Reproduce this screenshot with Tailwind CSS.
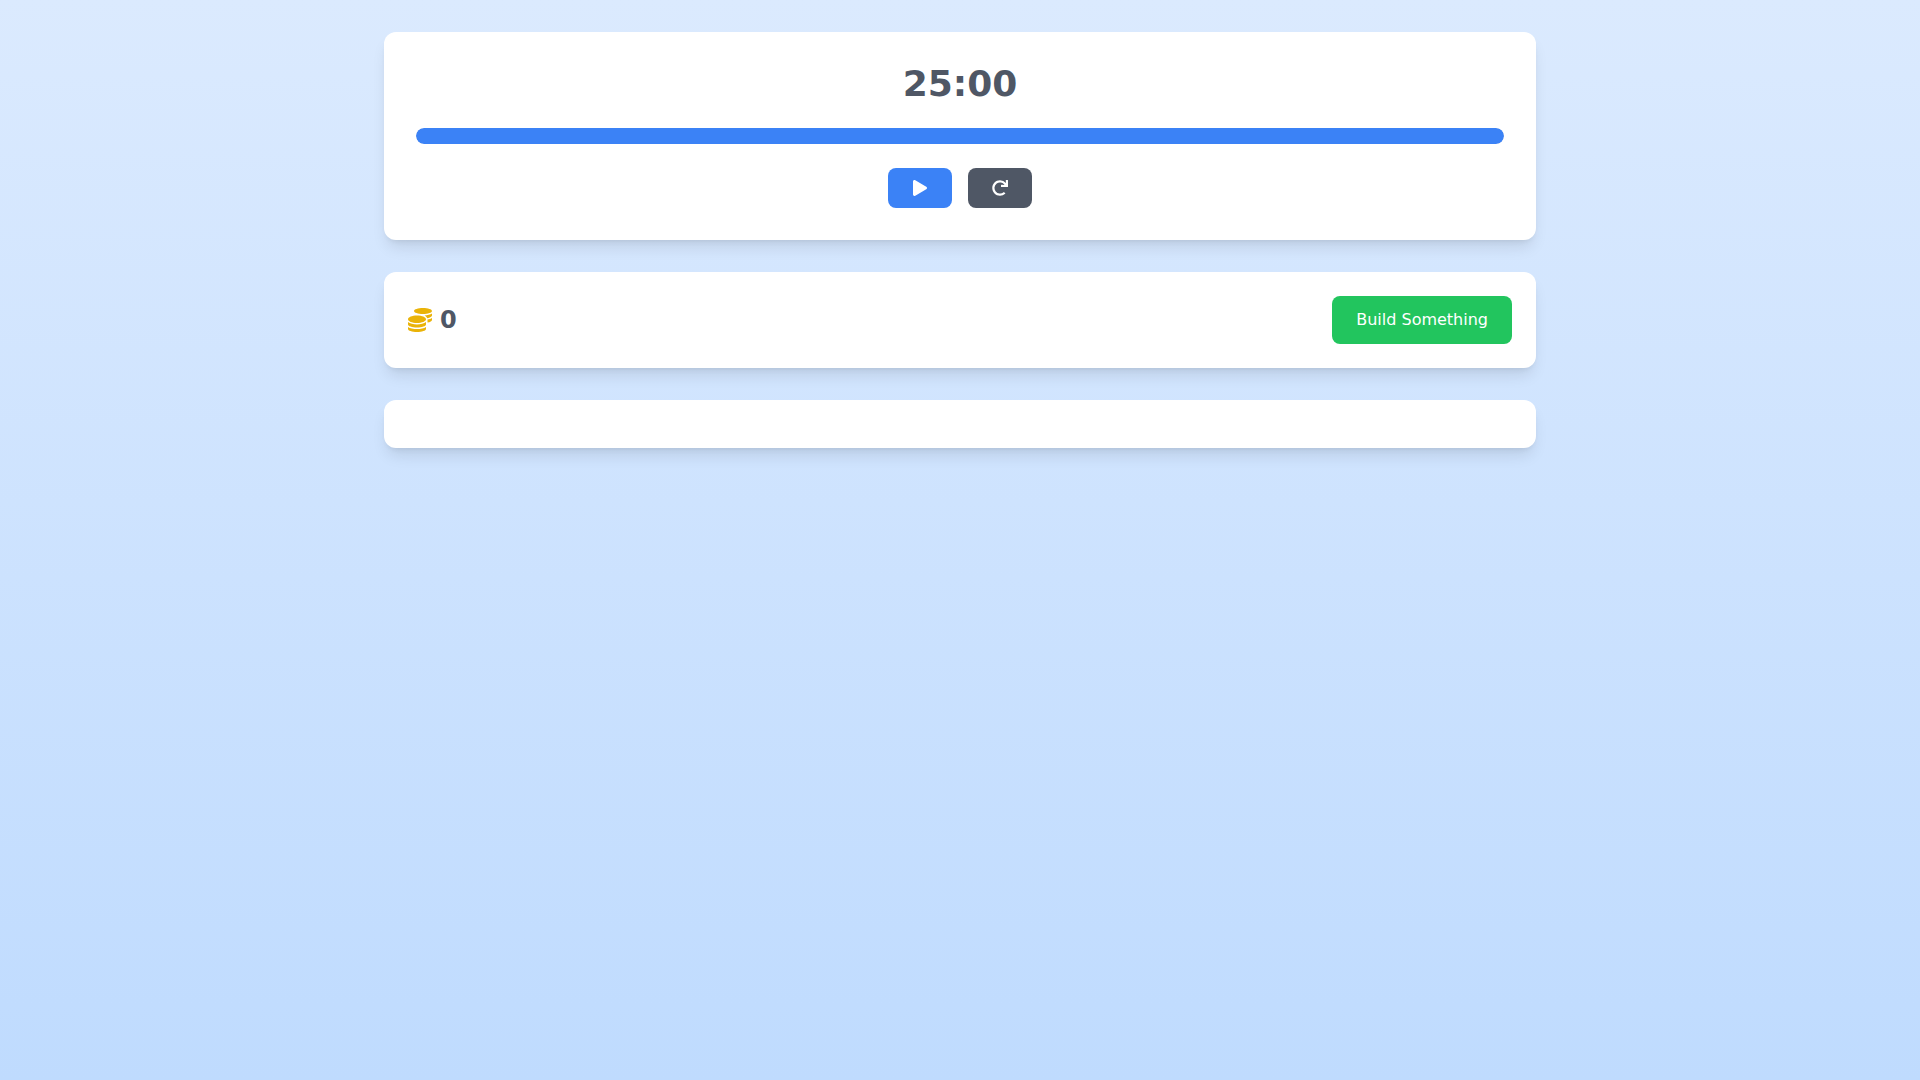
<!DOCTYPE html>
<html lang="en">
<head>
    <meta charset="UTF-8">
    <title>Pomodoro</title>
    <script src="https://cdn.jsdelivr.net/npm/@tailwindcss/browser@4"></script>
</head>
<body class="min-h-screen bg-gradient-to-b from-[#dbeafe] to-[#bfdbfe] font-['DejaVu_Sans',sans-serif]">
    <div class="max-w-[1152px] mx-auto py-8 space-y-8">
        <!-- timer -->
        <div class="bg-white rounded-xl shadow-lg p-8">
            <div class="text-4xl font-bold text-[#4f5765] text-center mb-6">25:00</div>
            <div class="h-4 bg-gray-200 rounded-full overflow-hidden mb-6">
                <div class="h-full bg-[#3b82f6] rounded-full w-full"></div>
            </div>
            <div class="flex justify-center gap-4">
                <button class="w-16 h-10 bg-[#3b82f6] text-white rounded-lg flex items-center justify-center">
                    <svg class="w-4 h-4" viewBox="0 0 448 512" fill="currentColor"><path d="M424.4 214.7L72.4 6.6C43.8-10.3 0 6.1 0 47.9V464c0 37.5 40.7 60.1 72.4 41.3l352-208c31.4-18.5 31.5-64.1 0-82.6z"/></svg>
                </button>
                <button class="w-16 h-10 bg-[#4f5765] text-white rounded-lg flex items-center justify-center">
                    <svg class="w-4 h-4" viewBox="0 0 512 512" fill="currentColor"><path d="M500.33 0h-47.41a12 12 0 0 0-12 12.57l4 82.76A247.42 247.42 0 0 0 256 8C119.34 8 7.9 119.53 8 256.19 8.1 393.07 119.1 504 256 504a247.1 247.1 0 0 0 166.18-63.91 12 12 0 0 0 .48-17.43l-34-34a12 12 0 0 0-16.38-.55A176 176 0 1 1 402.1 157.8l-101.53-4.87a12 12 0 0 0-12.57 12v47.41a12 12 0 0 0 12 12h200.33a12 12 0 0 0 12-12V12a12 12 0 0 0-12-12z"/></svg>
                </button>
            </div>
        </div>
        <!-- coins -->
        <div class="bg-white rounded-xl shadow-lg p-6 flex items-center justify-between">
            <div class="flex items-center gap-2">
                <svg class="w-6 h-6 text-[#eab308]" viewBox="0 0 512 512" fill="currentColor"><path d="M0 405.3V448c0 35.3 86 64 192 64s192-28.700 192-64v-42.700C342.700 434.400 267.200 448 192 448S41.300 434.400 0 405.300zM320 128c106 0 192-28.700 192-64S426 0 320 0 128 28.700 128 64s86 64 192 64zM0 300.400V352c0 35.300 86 64 192 64s192-28.700 192-64v-51.600c-41.300 34-116.900 51.600-192 51.600S41.300 334.400 0 300.400zm416 11c57.300-11.100 96-31.700 96-55.400v-42.700c-23.200 16.400-57.300 27.600-96 34.500v63.600zM192 160C86 160 0 195.800 0 240s86 80 192 80 192-35.800 192-80-86-80-192-80zm219.300 56.300c60-10.800 100.700-32 100.700-56.300v-42.700c-35.500 25.100-96.500 38.600-160.700 41.800 29.500 14.300 51.200 33.500 60 57.200z"/></svg>
                <span class="text-2xl font-bold text-[#4f5765]">0</span>
            </div>
            <button class="px-6 py-3 bg-[#22c55e] text-white rounded-lg">Build Something</button>
        </div>
        <!-- empty panel -->
        <div class="bg-white rounded-xl shadow-lg h-12"></div>
    </div>
</body>
</html>
